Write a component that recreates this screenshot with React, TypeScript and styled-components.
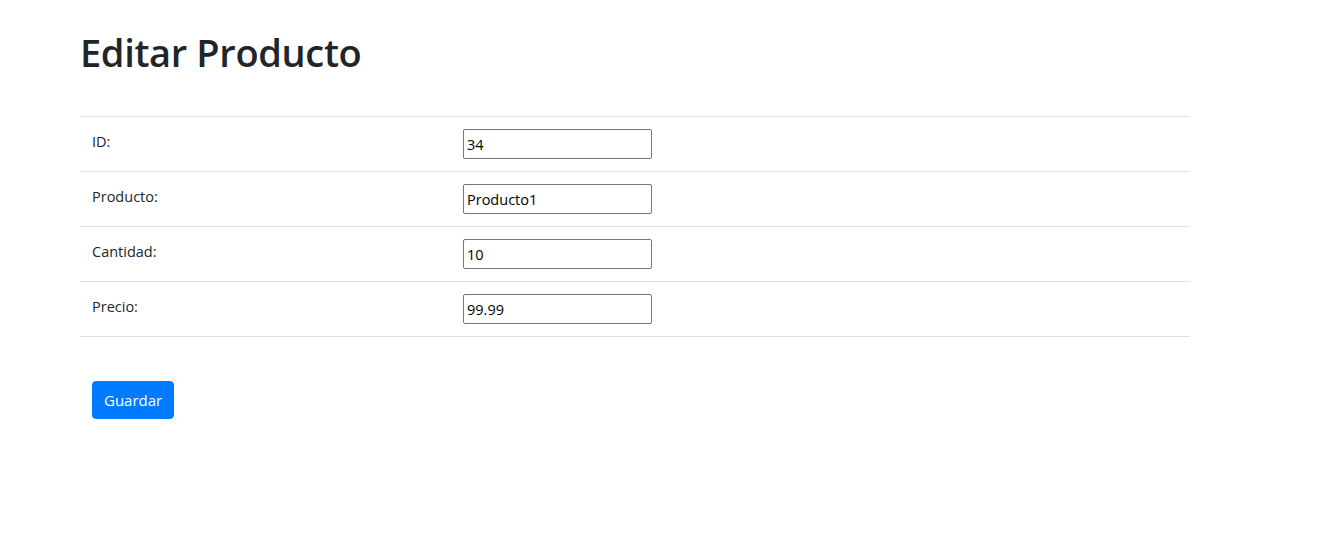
import React from "react";
import styled, { createGlobalStyle } from "styled-components";

const Global = createGlobalStyle`
  html, body { margin: 0; padding: 0; background: #fff; }
  body {
    font-family: "Open Sans", "Noto Sans", sans-serif;
    font-size: 16px;
    line-height: 1.5;
    color: #212529;
  }
  * { box-sizing: border-box; }
`;

const Container = styled.div`
  width: 1110px;
  margin-left: 80px;
  padding-top: 28px;
`;

const Title = styled.h1`
  margin: 0 0 40px;
  font-size: 38px;
  font-weight: 600;
  line-height: 48px;
  letter-spacing: -0.35px;
`;

const Table = styled.table`
  width: 100%;
  border-collapse: collapse;
  margin-bottom: 44px;
`;

const Row = styled.tr`
  &:last-child td { border-bottom: 1px solid #dee2e6; }
`;

const Cell = styled.td<{ $w?: number }>`
  border-top: 1px solid #dee2e6;
  padding: 12px;
  vertical-align: top;
  font-size: 14.5px;
  line-height: 25px;
  width: ${(p) => (p.$w ? `${p.$w}px` : "auto")};
`;

const Input = styled.input`
  display: block;
  width: 189px;
  height: 30px;
  border: 1px solid #767676;
  border-radius: 2px;
  padding: 1px 3px;
  font-family: "Open Sans", "Noto Sans", sans-serif;
  font-size: 14.5px;
  color: #000;
  background: #fff;
`;

const Button = styled.button`
  margin-left: 12px;
  background: #007bff;
  color: #fff;
  border: 1px solid #007bff;
  border-radius: 4px;
  padding: 6px 11px;
  font-family: "Open Sans", "Noto Sans", sans-serif;
  font-size: 15px;
  line-height: 24px;
  height: 38px;
  cursor: pointer;
`;

const fields = [
  { label: "ID:", value: "34" },
  { label: "Producto:", value: "Producto1" },
  { label: "Cantidad:", value: "10" },
  { label: "Precio:", value: "99.99" },
];

export default function App() {
  return (
    <>
      <Global />
      <Container>
        <Title>Editar Producto</Title>
        <Table>
          <tbody>
            {fields.map((f) => (
              <Row key={f.label}>
                <Cell $w={371}>{f.label}</Cell>
                <Cell>
                  <Input defaultValue={f.value} />
                </Cell>
              </Row>
            ))}
          </tbody>
        </Table>
        <Button>Guardar</Button>
      </Container>
    </>
  );
}
